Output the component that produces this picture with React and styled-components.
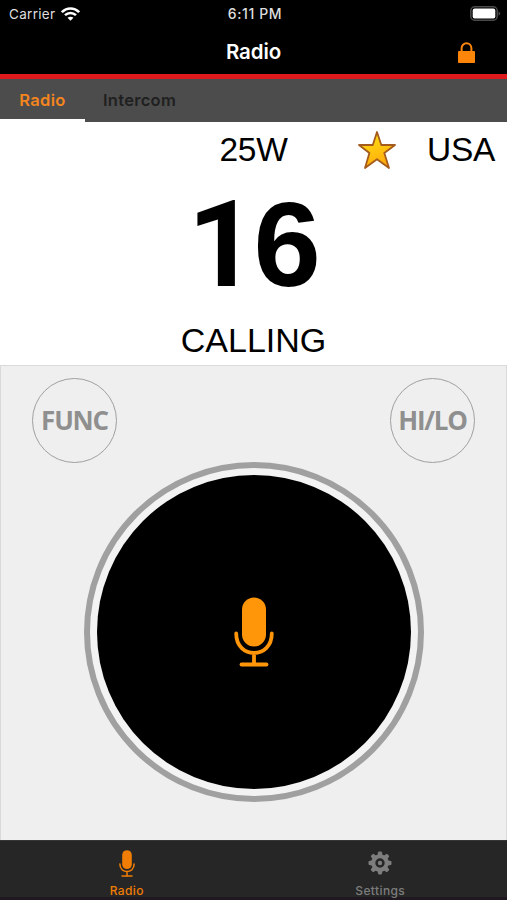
import React from 'react';
import styled, { createGlobalStyle } from 'styled-components';

const Global = createGlobalStyle`
  * { box-sizing: border-box; }
  body { margin: 0; background: #000; }
  button { padding: 0; border: 0; background: none; font: inherit; color: inherit; }
  svg { display: block; }
`;

const Screen = styled.div`
  width: 507px;
  height: 900px;
  display: flex;
  flex-direction: column;
  overflow: hidden;
  background: #fff;
  color: #000;
  font-family: Inter, sans-serif;
`;

const StatusBar = styled.div`
  display: grid;
  grid-template-columns: 1fr auto 1fr;
  align-items: center;
  height: 27px;
  padding: 0 6px 0 9px;
  background: #000;
  color: #dedede;
  font-size: 13.5px;
  line-height: 16px;
`;

const Carrier = styled.div`
  display: flex;
  align-items: center;
  gap: 6px;
  letter-spacing: 0.3px;
`;

const Clock = styled.div`
  font-size: 14px;
  font-weight: 500;
  letter-spacing: 0.6px;
`;

const BatterySlot = styled.div`
  justify-self: end;
`;

const NavBar = styled.header`
  display: grid;
  grid-template-columns: 1fr auto 1fr;
  align-items: center;
  height: 52px;
  padding: 4px 32px 1px 32px;
  background: #000;
  border-bottom: 5px solid #df1a1c;
`;

const NavTitle = styled.h1`
  grid-column: 2;
  margin: 0;
  color: #fff;
  font-size: 20.5px;
  line-height: 24px;
  font-weight: 600;
  letter-spacing: -0.1px;
`;

const LockButton = styled.button`
  justify-self: end;
`;

const Tabs = styled.nav`
  display: flex;
  height: 43px;
  background: #4c4c4c;
`;

const Tab = styled.button`
  width: ${(p) => p.$width}px;
  padding-top: 2px;
  border-bottom: 3px solid ${(p) => (p.$active ? '#fff' : 'transparent')};
  color: ${(p) => (p.$active ? '#f5851f' : '#202020')};
  font-size: 16.5px;
  font-weight: 600;
  letter-spacing: 0.3px;
`;

const Display = styled.section`
  height: 243px;
  flex: none;
  font-family: "Liberation Sans", Arial, sans-serif;
  font-size: 34px;
  line-height: 40px;
  text-align: center;
`;

const Readouts = styled.div`
  display: grid;
  grid-template-columns: 1fr 68px 1fr;
  align-items: center;
  height: 56px;
  font-size: 33.5px;
  letter-spacing: -0.3px;
`;

const Power = styled.span`
  grid-column: 2;
`;

const Region = styled.div`
  display: flex;
  align-items: center;
  justify-content: flex-end;
  gap: 31px;
  padding-right: 12px;
`;

const Channel = styled.div`
  display: flex;
  justify-content: center;
  align-items: baseline;
  height: 132px;
  padding-top: 3px;
  font-size: 121px;
  line-height: 126px;
  font-weight: 700;
`;

const Digit = styled.span`
  width: 66px;
  font-family: ${(p) => (p.$plain ? 'Roboto, sans-serif' : 'inherit')};
`;

const ChannelName = styled.div`
  height: 55px;
  line-height: 60px;
`;

const Controls = styled.main`
  height: 475px;
  flex: none;
  display: flex;
  flex-direction: column;
  align-items: center;
  padding-top: 12px;
  background: #efefef;
  border: solid #dadada;
  border-width: 1px 1px 0;
`;

const KeyRow = styled.div`
  width: 100%;
  display: flex;
  justify-content: space-between;
  padding: 0 31px;
`;

const RoundKey = styled.button`
  width: 85px;
  height: 85px;
  padding-bottom: 1px;
  border: 1.5px solid #a0a0a0;
  border-radius: 50%;
  color: #8f8f8f;
  font-family: "Open Sans", "Noto Sans", sans-serif;
  font-size: 26px;
  line-height: 36px;
  font-weight: 700;
  letter-spacing: -1.2px;
  white-space: nowrap;
`;

const TalkButton = styled.button`
  width: 340px;
  height: 340px;
  margin-top: -1px;
  display: grid;
  place-items: center;
  border: 6px solid #a0a0a0;
  border-radius: 50%;
  background: #f3f3f3;
`;

const TalkFace = styled.span`
  width: 314px;
  height: 314px;
  display: grid;
  place-items: center;
  border-radius: 50%;
  background: #000;
`;

const BottomBar = styled.nav`
  display: grid;
  grid-template-columns: 1fr 1fr;
  height: 60px;
  background: #262626;
  border-top: 1px solid #353535;
  border-bottom: 3px solid #201820;
`;

const BottomItem = styled.button`
  display: flex;
  flex-direction: column;
  align-items: center;
  padding: 9px 0 0;
  color: ${(p) => (p.$active ? '#f07d05' : '#7d7d7d')};
  font-size: 12px;
  line-height: 15px;
  font-weight: 500;
  letter-spacing: 0.4px;
`;

const BottomIcon = styled.span`
  height: 33px;
  padding-top: ${(p) => p.$drop || 0}px;
`;

function Microphone({ width, height, color }) {
  return (
    <svg width={width} height={height} viewBox="0 0 40 70" fill="none" preserveAspectRatio="none">
      <rect x="8" y="0.5" width="24" height="49" rx="12" fill={color} />
      <path d="M2.2 36.5C2.2 62.5 37.8 62.5 37.8 36.5M20 56V67" stroke={color} strokeWidth="3.8" strokeLinecap="round" />
      <path d="M7.5 67.5H32.5" stroke={color} strokeWidth="3.8" strokeLinecap="round" />
    </svg>
  );
}

function Wifi() {
  return (
    <svg width="19" height="14" viewBox="0 0 18 14" preserveAspectRatio="none" fill="none" stroke="#fff" strokeWidth="2.4">
      <path d="M.8 5.2C5.5.2 12.5.2 17.2 5.2M3.8 8.2C6.8 5.2 11.2 5.2 14.2 8.2" />
      <path d="M9 13.7L6.2 10.8C7.8 9.3 10.2 9.3 11.8 10.8Z" fill="#fff" stroke="none" />
    </svg>
  );
}

function Battery() {
  return (
    <svg width="31" height="15" viewBox="0 0 31 15">
      <rect x=".8" y=".8" width="26.4" height="13.4" rx="4" fill="#000" stroke="#4b4b4b" strokeWidth="1.5" />
      <rect x="2.7" y="2.6" width="22.6" height="9.8" rx="2" fill="#fff" />
      <path d="M28.5 5.2Q32 7.5 28.5 9.8Z" fill="#4b4b4b" />
    </svg>
  );
}

function Lock() {
  return (
    <svg width="17" height="21" viewBox="0 0 17 21" fill="none">
      <rect y="9" width="17" height="12" rx=".8" fill="#fc850a" />
      <path d="M3.6 10V6.2A4.9 4.9 0 0 1 13.4 6.2V10" stroke="#fc850a" strokeWidth="2" />
    </svg>
  );
}

function Star() {
  return (
    <svg width="38" height="38" viewBox="0 0 38 38">
      <defs>
        <linearGradient id="gold" x1="0" y1="0" x2=".35" y2="1">
          <stop stopColor="#ffe712" />
          <stop offset="1" stopColor="#ffac0d" />
        </linearGradient>
      </defs>
      <path d="M19 1L23.3 14H37L26.3 22L31 37L19 28.2L7 37L11.4 22L1 14H14.8Z" fill="url(#gold)" stroke="#a45b1b" strokeWidth="1.8" strokeLinejoin="round" />
    </svg>
  );
}

function Gear() {
  const teeth = [0, 45, 90, 135, 180, 225, 270, 315];
  return (
    <svg width="24" height="24" viewBox="0 0 24 24" fill="#7d7d7d">
      {teeth.map((a) => (
        <path key={a} d="M9.3 5L10.1 1.2Q10.3.5 11 .5H13Q13.7.5 13.9 1.2L14.7 5Z" transform={`rotate(${a} 12 12)`} />
      ))}
      <circle cx="12" cy="12" r="6.7" fill="none" stroke="#7d7d7d" strokeWidth="4" />
      <circle cx="12" cy="12" r="2.2" />
    </svg>
  );
}

export default function App() {
  return (
    <>
      <Global />
      <Screen>
        <StatusBar>
          <Carrier>Carrier <Wifi /></Carrier>
          <Clock>6:11 PM</Clock>
          <BatterySlot><Battery /></BatterySlot>
        </StatusBar>
        <NavBar>
          <NavTitle>Radio</NavTitle>
          <LockButton aria-label="Lock"><Lock /></LockButton>
        </NavBar>
        <Tabs>
          <Tab $active $width={85}>Radio</Tab>
          <Tab $width={109}>Intercom</Tab>
        </Tabs>
        <Display>
          <Readouts>
            <Power>25W</Power>
            <Region><Star /><span>USA</span></Region>
          </Readouts>
          <Channel><Digit $plain>1</Digit><Digit>6</Digit></Channel>
          <ChannelName>CALLING</ChannelName>
        </Display>
        <Controls>
          <KeyRow>
            <RoundKey>FUNC</RoundKey>
            <RoundKey>HI/LO</RoundKey>
          </KeyRow>
          <TalkButton aria-label="Push to talk">
            <TalkFace><Microphone width={40} height={70} color="#ff9508" /></TalkFace>
          </TalkButton>
        </Controls>
        <BottomBar>
          <BottomItem $active><BottomIcon><Microphone width={16} height={27} color="#f07d05" /></BottomIcon>Radio</BottomItem>
          <BottomItem><BottomIcon $drop={1}><Gear /></BottomIcon>Settings</BottomItem>
        </BottomBar>
      </Screen>
    </>
  );
}
